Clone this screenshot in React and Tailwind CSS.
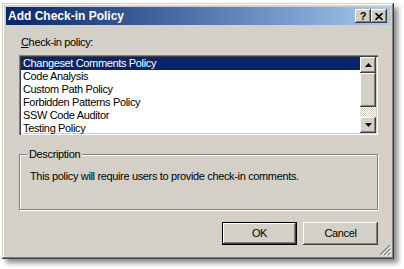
import React from "react";

const policies = [
  "Changeset Comments Policy",
  "Code Analysis",
  "Custom Path Policy",
  "Forbidden Patterns Policy",
  "SSW Code Auditor",
  "Testing Policy",
];

const raised =
  "shadow-[inset_-1px_-1px_#404040,inset_1px_1px_#ffffff,inset_-2px_-2px_#808080,inset_2px_2px_#d4d0c8]";

const TitleButton = ({ children }) => (
  <div
    className={`w-[16px] h-[14px] bg-[#d4d0c8] ${raised} flex items-center justify-center text-[11px] font-bold text-black leading-none`}
  >
    {children}
  </div>
);

const ScrollArrow = ({ up }) => (
  <div className={`w-[16px] h-[16px] bg-[#d4d0c8] ${raised} flex items-center justify-center`}>
    <svg width="7" height="4" viewBox="0 0 7 4">
      {up ? <path d="M3.5 0 L7 4 L0 4 Z" fill="#000" /> : <path d="M0 0 L7 0 L3.5 4 Z" fill="#000" />}
    </svg>
  </div>
);

const Button = ({ children, isDefault }) => (
  <button
    className={`w-[75px] h-[23px] bg-[#d4d0c8] text-[11px] text-black ${
      isDefault
        ? "border border-black shadow-[inset_-1px_-1px_#404040,inset_1px_1px_#ffffff,inset_-2px_-2px_#808080]"
        : raised
    }`}
  >
    {children}
  </button>
);

export default function App() {
  return (
    <div
      className="w-[404px] h-[269px] bg-white pt-[3px] pl-[2px] overflow-hidden"
      style={{ fontFamily: '"Liberation Sans", Arial, sans-serif' }}
    >
      <div className="relative w-[392px] h-[256px] bg-[#d4d0c8] p-[4px] flex flex-col shadow-[inset_-1px_-1px_#404040,inset_1px_1px_#d4d0c8,inset_-2px_-2px_#808080,inset_2px_2px_#ffffff,4px_4px_5px_rgba(0,0,0,0.45)]">
        {/* Title bar */}
        <div className="h-[18px] flex items-center justify-between bg-gradient-to-r from-[#0a246a] to-[#a6caf0] pl-[2px] pr-[3px]">
          <span className="text-white font-bold text-[12px] leading-none">Add Check-in Policy</span>
          <div className="flex">
            <TitleButton>?</TitleButton>
            <TitleButton>
              <svg width="8" height="7" viewBox="0 0 8 7">
                <path d="M0.5 0 L7.5 7 M7.5 0 L0.5 7" stroke="#000" strokeWidth="1.6" />
              </svg>
            </TitleButton>
          </div>
        </div>

        {/* Body */}
        <div className="flex-1 flex flex-col pl-[13px] pr-[12px] text-[11px] tracking-[-0.35px] text-black">
          <div className="mt-[11px] leading-[13px] pl-[2px]">
            <span className="underline">C</span>heck-in policy:
          </div>

          <div className="mt-[6px] h-[80px] bg-white flex shadow-[inset_1px_1px_#808080,inset_2px_2px_#404040,inset_-1px_-1px_#ffffff,inset_-2px_-2px_#d4d0c8] p-[2px]">
            <div className="flex-1 flex flex-col">
              {policies.map((p, i) => (
                <div
                  key={p}
                  className={`h-[13px] leading-[13px] pl-[2px] ${
                    i === 0 ? "bg-[#0a246a] text-white" : "text-black"
                  }`}
                >
                  {p}
                </div>
              ))}
            </div>
            <div className="w-[16px] flex flex-col">
              <ScrollArrow up />
              <div className={`h-[34px] bg-[#d4d0c8] ${raised}`} />
              <div className="flex-1 bg-[repeating-conic-gradient(#d4d0c8_0_25%,#ffffff_0_50%)] bg-[length:2px_2px]" />
              <ScrollArrow />
            </div>
          </div>

          <fieldset className="mt-[13px] h-[62px] border border-[#808080] shadow-[inset_1px_1px_#ffffff,1px_1px_#ffffff] px-[10px]">
            <legend className="px-[2px] ml-[-3px] leading-[13px] bg-[#d4d0c8]">Description</legend>
            <div className="mt-[9px] leading-[13px]">
              This policy will require users to provide check-in comments.
            </div>
          </fieldset>

          <div className="mt-[12px] flex justify-end gap-[6px]">
            <Button isDefault>OK</Button>
            <Button>Cancel</Button>
          </div>
        </div>

        {/* Size grip */}
        <svg className="absolute right-[3px] bottom-[3px]" width="12" height="12" viewBox="0 0 12 12">
          <path d="M11 1 L1 11 M11 5 L5 11 M11 9 L9 11" stroke="#808080" strokeWidth="1.2" />
          <path d="M12 2 L2 12 M12 6 L6 12 M12 10 L10 12" stroke="#ffffff" strokeWidth="1" />
        </svg>
      </div>
    </div>
  );
}
